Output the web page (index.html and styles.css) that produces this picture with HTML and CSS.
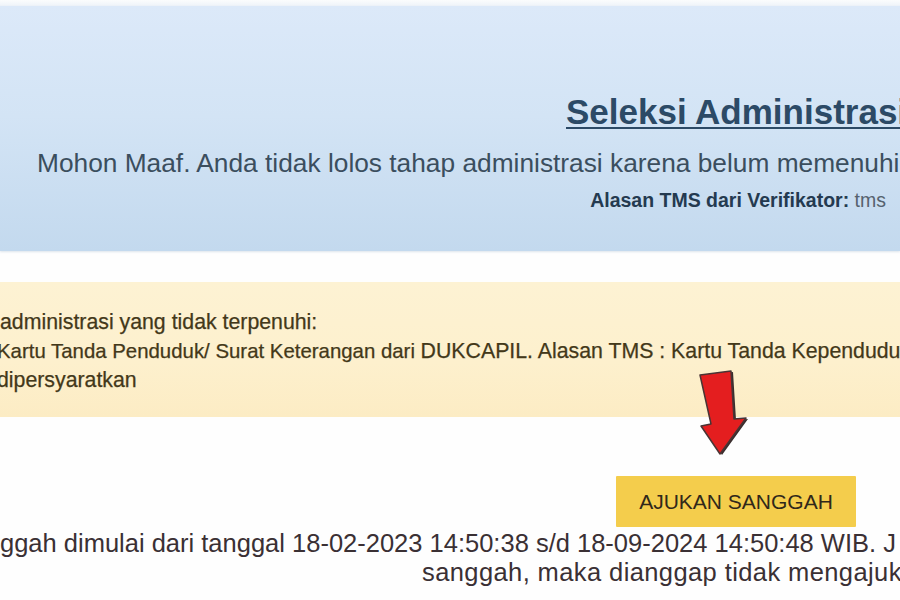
FILE: index.html
```html
<!DOCTYPE html>
<html lang="id">
<head>
<meta charset="utf-8">
<title>Seleksi Administrasi</title>
<link rel="stylesheet" href="styles.css">
</head>
<body>
<div class="page">
  <div class="top-strip"></div>
  <section class="result">
    <h1 class="result-title"><span>Seleksi Administrasi</span></h1>
    <p class="result-msg">Mohon Maaf. Anda tidak lolos tahap administrasi karena belum memenuhi</p>
    <p class="result-reason"><b>Alasan TMS dari Verifikator:</b> tms</p>
  </section>
  <section class="requirements">
    <p class="req-line">administrasi yang tidak terpenuhi:</p>
    <p class="req-line req-shift"><span class="req-part">Kartu Tanda Penduduk/ Surat Keterangan dari </span>DUKCAPIL. Alasan TMS : Kartu Tanda Kependuduk</p>
    <p class="req-line req-shift">dipersyaratkan</p>
  </section>
  <section class="appeal">
    <div class="appeal-actions">
      <button class="appeal-btn" type="button">AJUKAN SANGGAH</button>
      <svg class="arrow" width="54" height="94" viewBox="0 0 54 94">
        <polygon points="5,10 36,6 39,54 51,53 25,89 6,61 16,59" fill="#3a2e2e" transform="translate(2,1)"/>
        <polygon points="5,10 36,6 39,54 51,53 25,89 6,61 16,59" fill="#e41e1f" stroke="#4a3434" stroke-width="1.5" stroke-linejoin="round"/>
      </svg>
    </div>
    <p class="appeal-text">ggah dimulai dari tanggal 18-02-2023 14:50:38 s/d 18-09-2024 14:50:48 WIB. J</p>
    <p class="appeal-text appeal-text-2">sanggah, maka dianggap tidak mengajuk</p>
  </section>
</div>
</body>
</html>
```

FILE: styles.css
```css
html, body {
  margin: 0;
  padding: 0;
  background: #ffffff;
}
body {
  font-family: "Liberation Sans", Arial, Helvetica, sans-serif;
  overflow: hidden;
}
.page {
  width: 900px;
  height: 600px;
  overflow: hidden;
  background: #fefefe;
}
.top-strip {
  height: 6px;
  background: linear-gradient(#fbfcfd, #eef3f9);
}
.result {
  height: 245px;
  box-sizing: border-box;
  padding-top: 86px;
  background: linear-gradient(180deg, #dce9f9 0%, #d3e4f5 45%, #c3d9ee 100%);
  box-shadow: 0 1px 2px rgba(120, 150, 180, 0.25);
  white-space: nowrap;
}
.result-title {
  margin: 0;
  padding-left: 566px;
  font-size: 35px;
  line-height: 40px;
  font-weight: bold;
  color: #2c4a66;
}
.result-title span {
  text-decoration: underline;
  text-decoration-thickness: 2px;
  text-underline-offset: 3px;
}
.result-msg {
  margin: 15px 0 0;
  padding-left: 37px;
  font-size: 26.3px;
  line-height: 32px;
  color: #3b4e5e;
}
.result-reason {
  margin: 9px 0 0;
  padding-right: 14px;
  text-align: right;
  font-size: 19.5px;
  line-height: 24px;
  color: #56626e;
}
.result-reason b {
  color: #243a50;
}
.requirements {
  margin-top: 31px;
  height: 135px;
  box-sizing: border-box;
  padding-top: 26px;
  background: linear-gradient(180deg, #fdf2d3 0%, #fdf0cd 60%, #fcecc4 100%);
  white-space: nowrap;
}
.req-line {
  margin: 0;
  font-size: 21.3px;
  line-height: 29px;
  color: #433819;
  -webkit-text-stroke: 0.25px #433819;
}
.req-shift {
  margin-left: -3px;
}
.req-part {
  font-size: 20.4px;
}
.appeal {
  white-space: nowrap;
}
.appeal-actions {
  position: relative;
  padding: 59px 0 0 616px;
}
.appeal-btn {
  display: block;
  width: 240px;
  height: 51px;
  border: none;
  border-radius: 1px;
  background: #f4cd4c;
  font-family: "Liberation Sans", Arial, sans-serif;
  font-size: 21px;
  color: #30281a;
  padding: 0;
}
.arrow {
  position: absolute;
  left: 695px;
  top: -52px;
}
.appeal-text {
  margin: 2px 0 0;
  font-size: 25.5px;
  line-height: 29px;
  color: #3a3034;
}
.appeal-text-2 {
  margin-top: 0;
  padding-left: 422px;
  letter-spacing: 0.4px;
}
```
